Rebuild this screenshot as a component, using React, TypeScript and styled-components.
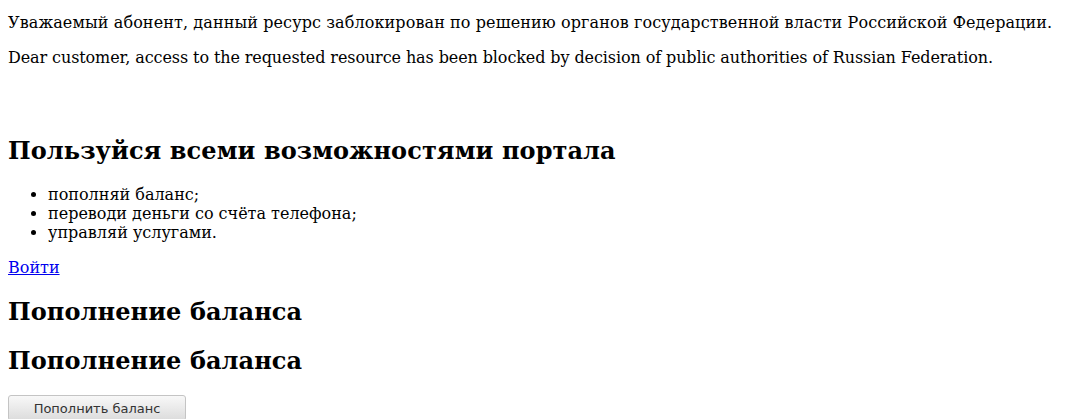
import React from 'react';
import styled, { createGlobalStyle } from 'styled-components';

const GlobalStyle = createGlobalStyle`
    body{
        margin:0;
        font-family:"DejaVu Serif", serif;
        font-size:16px;
        color:#000;
        background:#fff;
    }
`;

export default function App(){
    const features = [
        "пополняй баланс;",
        "переводи деньги со счёта телефона;",
        "управляй услугами.",
    ];
    return(
        <Page>
            <GlobalStyle/>
            <Notice $tracking={0.1} $first>Уважаемый абонент, данный ресурс заблокирован по решению органов государственной власти Российской Федерации.</Notice>
            <Notice $tracking={-0.1}>Dear customer, access to the requested resource has been blocked by decision of public authorities of Russian Federation.</Notice>
            <Portal>
                <Title>Пользуйся всеми возможностями портала</Title>
                <Features>
                    {features.map((f)=>{
                        return <li key={f}>{f}</li>
                    })}
                </Features>
                <LoginLine><a href="#">Войти</a></LoginLine>
            </Portal>
            <Title>Пополнение баланса</Title>
            <Title>Пополнение баланса</Title>
            <PayButton type="button">Пополнить баланс</PayButton>
        </Page>
    )
}

const Page = styled.div`
    padding:13px 8px 8px;
`
const Notice = styled.p<{$tracking:number; $first?:boolean}>`
    margin:${p=>p.$first ? "0 0 16px" : "16px 0"};
    line-height:19px;
    letter-spacing:${p=>p.$tracking}px;
`
const Portal = styled.div`
    margin-top:69px;
`
const Title = styled.h2`
    font-size:24px;
    font-weight:bold;
    line-height:29px;
    margin:20px 0;
    letter-spacing:0.08px;
`
const Features = styled.ul`
    margin:16px 0;
    padding-left:40px;
    line-height:19px;
`
const LoginLine = styled.p`
    margin:16px 0;
    line-height:19px;
    a{
        color:#0000ee;
    }
`
const PayButton = styled.button`
    display:block;
    width:178px;
    height:26px;
    margin:0;
    padding:0 8px;
    font-family:"DejaVu Sans", sans-serif;
    font-size:13px;
    color:#333;
    border:1px solid #c4c4c4;
    border-radius:3px;
    background:linear-gradient(#f8f8f8, #dcdcdc);
`
